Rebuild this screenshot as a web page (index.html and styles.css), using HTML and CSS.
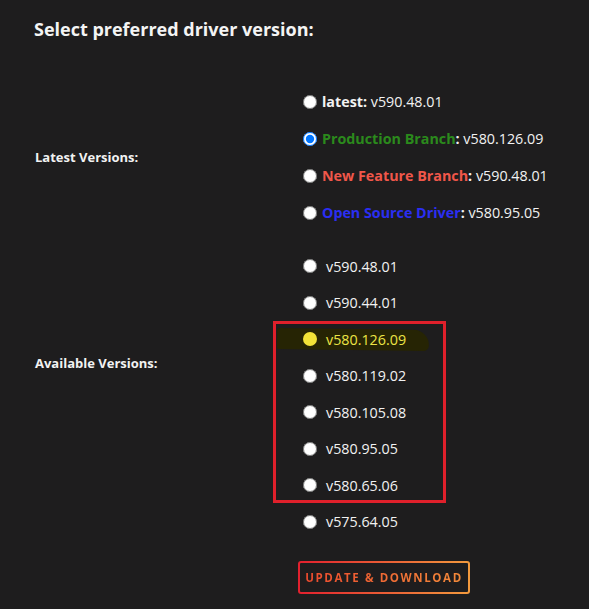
FILE: index.html
```
<!DOCTYPE html>
<html lang="en">
<head>
    <meta charset="UTF-8">
    <meta name="viewport" content="width=device-width, initial-scale=1.0">
    <title>Driver Manager</title>
    <link rel="stylesheet" href="styles.css">
</head>
<body>
    <div class="panel">
        <h2 class="title">Select preferred driver version:</h2>

        <div class="group latest">
            <div class="group-label">Latest Versions:</div>
            <div class="options">
                <label class="option"><input type="radio" name="driver"><span><b>latest:</b> v590.48.01</span></label>
                <label class="option"><input type="radio" name="driver" checked><span><b class="green">Production Branch</b><b>:</b> v580.126.09</span></label>
                <label class="option"><input type="radio" name="driver"><span><b class="red">New Feature Branch</b><b>:</b> v590.48.01</span></label>
                <label class="option"><input type="radio" name="driver"><span><b class="blue">Open Source Driver</b><b>:</b> v580.95.05</span></label>
            </div>
        </div>

        <div class="group available">
            <div class="group-label">Available Versions:</div>
            <div class="options">
                <label class="option"><input type="radio" name="driver"><span>v590.48.01</span></label>
                <label class="option"><input type="radio" name="driver"><span>v590.44.01</span></label>
                <div class="marked">
                    <div class="mark-box"></div>
                    <label class="option current">
                        <i class="brush"></i>
                        <i class="dot"></i>
                        <span>v580.126.09</span>
                    </label>
                    <label class="option"><input type="radio" name="driver"><span>v580.119.02</span></label>
                    <label class="option"><input type="radio" name="driver"><span>v580.105.08</span></label>
                    <label class="option"><input type="radio" name="driver"><span>v580.95.05</span></label>
                    <label class="option"><input type="radio" name="driver"><span>v580.65.06</span></label>
                </div>
                <label class="option"><input type="radio" name="driver"><span>v575.64.05</span></label>
                <div class="actions">
                    <button class="update-btn"><span>UPDATE &amp; DOWNLOAD</span></button>
                </div>
            </div>
        </div>
    </div>
</body>
</html>
```

FILE: styles.css
```
body {
    margin: 0;
    background-color: #1e1d1e;
    color: #f2f2f2;
    font-family: "Open Sans", Arial, sans-serif;
}
.panel {
    padding: 15px 0 0 34px;
}
.title {
    margin: 0;
    font-size: 18px;
    font-weight: bold;
    color: #f4f4f4;
    line-height: 28px;
}
.group {
    display: grid;
    grid-template-columns: 264px 1fr;
}
.latest {
    margin-top: 40px;
}
.available {
    margin-top: 17px;
}
.group-label {
    font-size: 13px;
    font-weight: bold;
    align-self: center;
    padding-left: 1px;
}
.available .group-label {
    margin-bottom: 116px;
}
.options {
    display: flex;
    flex-direction: column;
}
.option {
    position: relative;
    display: flex;
    align-items: center;
    height: 37px;
    font-size: 14.3px;
    white-space: pre;
}
.option span {
    margin-left: 5px;
}
.available .option {
    height: 36.5px;
}
.available .option span {
    margin-left: 9px;
}
.option input {
    margin: 0 0 0 5px;
    width: 14px;
    height: 14px;
}
.option b {
    font-weight: bold;
}
.green {
    color: #2b8a1c;
}
.red {
    color: #f0574a;
}
.blue {
    color: #2b2ef2;
}
.marked {
    position: relative;
}
.mark-box {
    position: absolute;
    left: -25px;
    top: 0;
    width: 167px;
    height: 176px;
    border: 3px solid #e0202b;
}
.current {
    color: #ece445;
}
.current .dot {
    position: relative;
    width: 14px;
    height: 14px;
    margin-left: 5px;
    border-radius: 50%;
    background: #f2e238;
}
.current span {
    position: relative;
}
.brush {
    position: absolute;
    left: -21px;
    top: 8px;
    width: 152px;
    height: 21px;
    background: #262404;
    border-radius: 8px 40px 14px 4px;
    transform: rotate(0.8deg);
}
.actions {
    padding: 21px 0 0 0;
}
.update-btn {
    width: 172px;
    height: 33px;
    padding: 0;
    border: 2px solid transparent;
    border-radius: 3px;
    background: linear-gradient(#1e1d1e, #1e1d1e) padding-box,
                linear-gradient(90deg, #e2202e, #f39a3d) border-box;
    font-family: "Open Sans", Arial, sans-serif;
    font-size: 11.5px;
    font-weight: bold;
    letter-spacing: 1.6px;
    white-space: nowrap;
    text-align: center;
    cursor: pointer;
}
.update-btn span {
    background: linear-gradient(90deg, #ec4a2e, #f38a3a);
    -webkit-background-clip: text;
    background-clip: text;
    color: transparent;
}
```
